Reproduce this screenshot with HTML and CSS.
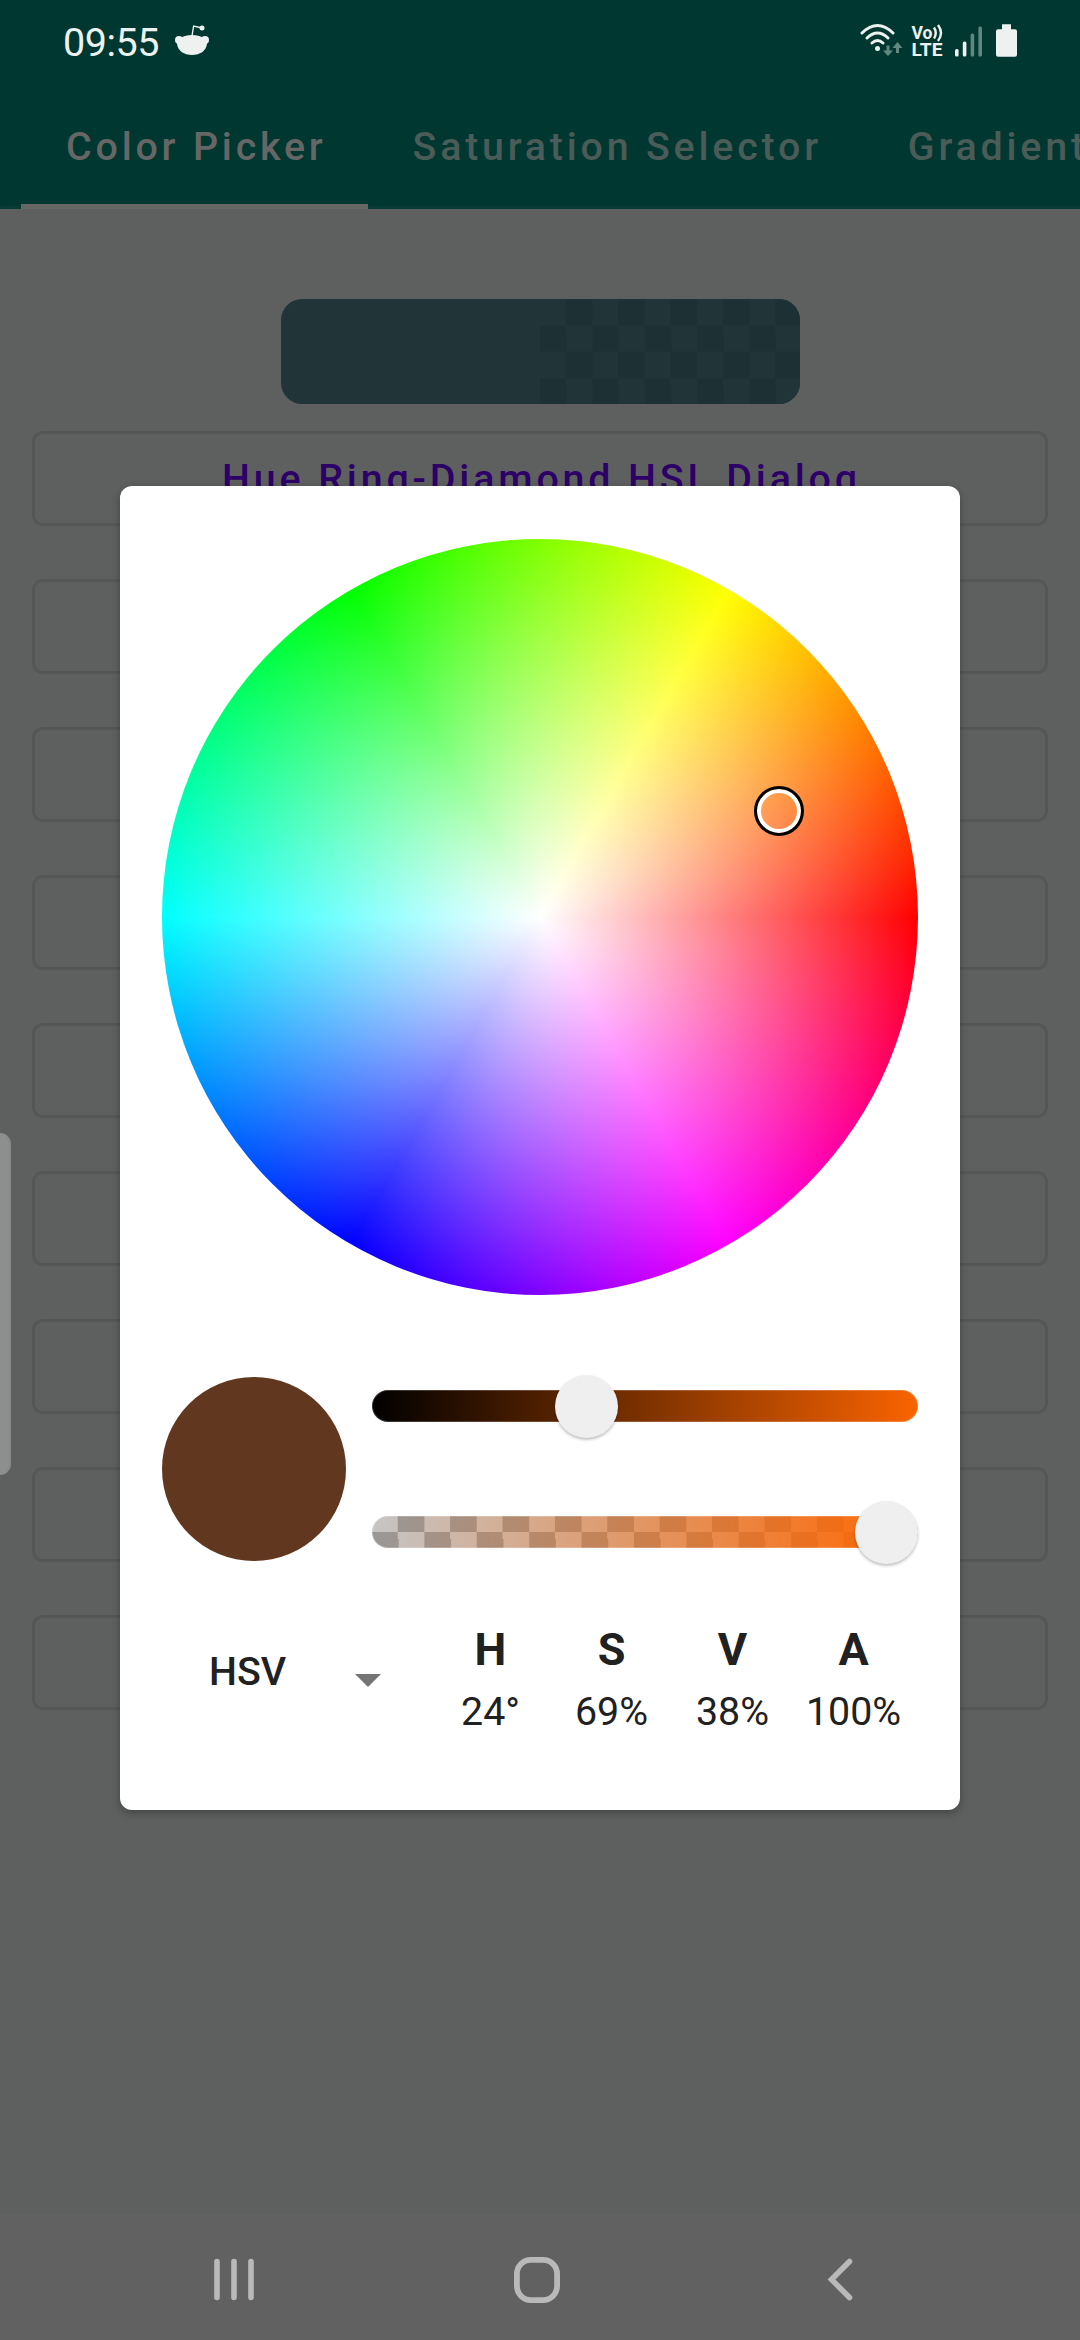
FILE: index.html
```html
<!DOCTYPE html>
<html lang="en">
<head>
<meta charset="utf-8">
<title>Color Picker</title>
<link rel="stylesheet" href="styles.css">
</head>
<body>
<div class="screen">
  <header class="header">
    <div class="status">
      <span class="clock">09:55</span>
      <svg class="notice" width="34" height="32" viewBox="0 0 34 32" fill="#edf1f0">
        <path d="M17 12 18.600 2 26 3.800" fill="none" stroke="#edf1f0" stroke-width="1.400"/>
        <circle cx="27" cy="4" r="2.500"/><circle cx="4" cy="16" r="4"/><circle cx="30" cy="16" r="4"/>
        <path d="M17 11C26 11 32 15 32 20C31 27 25 31 17 31S3 27 2 20C2 15 8 11 17 11Z"/>
      </svg>
      <svg class="indicators" width="160" height="46" viewBox="0 0 160 46">
        <g fill="none" stroke="#edf1f0" stroke-width="3" stroke-linecap="round">
          <path d="M3 13Q18.500 -2 34 13"/><path d="M8 18Q18.500 8 29 18"/><path d="M13 23Q18.500 18 24 23"/>
        </g>
        <circle cx="18.500" cy="28.500" r="2.500" fill="#edf1f0"/>
        <g fill="#628781">
          <path d="M27.500 25.500h3v5h3.500L29 36 24 30.500H27.500Z"/><path d="M37 33h3v-5H43.500L38.500 22 33.500 28h3.500Z"/>
        </g>
        <g class="volte" fill="#edf1f0">
          <text x="52.500" y="18.500" textLength="21" lengthAdjust="spacingAndGlyphs">Vo</text>
          <text x="52.500" y="36" textLength="31" lengthAdjust="spacingAndGlyphs">LTE</text>
        </g>
        <path d="M75 7.500Q78.500 13 75 18.500M79 5Q85 13 79 21" fill="none" stroke="#edf1f0" stroke-width="2.400"/>
        <g fill="#edf1f0"><rect x="96" y="29" width="3.600" height="7.600" rx="1.500"/><rect x="103.800" y="21.500" width="3.600" height="15.100" rx="1.500"/></g>
        <g fill="#628781"><rect x="111.600" y="13.500" width="3.600" height="23.100" rx="1.500"/><rect x="119.400" y="6.500" width="3.600" height="30.100" rx="1.500"/></g>
        <path d="M143 4.300h9v5h4q2 0 2 2v23.400q0 2-2 2h-17q-2 0-2-2v-23.400q0-2 2-2h4Z" fill="#edf1f0"/>
      </svg>
    </div>
    <nav class="tabs">
      <div class="tab tab-active">Color Picker</div>
      <div class="tab">Saturation Selector</div>
      <div class="tab">Gradient</div>
    </nav>
  </header>
  <main class="content">
    <div class="preview"><div class="preview-alpha"></div></div>
    <div class="buttons">
      <div class="button">Hue Ring-Diamond HSL Dialog</div>
      <div class="button"></div>
      <div class="button"></div>
      <div class="button"></div>
      <div class="button"></div>
      <div class="button"></div>
      <div class="button"></div>
      <div class="button"></div>
      <div class="button"></div>
    </div>
  </main>
  <footer class="navbar">
    <svg width="42" height="46" viewBox="0 0 42 46" stroke="#b9b9b9" stroke-width="5.600" stroke-linecap="round"><path d="M4 4.500V40.500M21 4.500V40.500M38 4.500V40.500"/></svg>
    <svg class="home" width="48" height="48" viewBox="0 0 48 48" fill="none" stroke="#b9b9b9" stroke-width="5.800"><rect x="3.900" y="3.900" width="40.200" height="40.200" rx="14"/></svg>
    <svg width="28" height="46" viewBox="0 0 28 46" fill="none" stroke="#b9b9b9" stroke-width="5.600" stroke-linecap="round"><path d="M23.500 4.500 5.500 22.500 23.500 40.500"/></svg>
  </footer>

  <div class="edge-handle"></div>

  <section class="dialog">
    <div class="wheel"><span class="wheel-thumb"></span></div>
    <div class="controls">
      <div class="swatch"></div>
      <div class="sliders">
        <div class="slider slider-value"><span class="thumb thumb-value"></span></div>
        <div class="slider slider-alpha"><span class="thumb thumb-alpha"></span></div>
      </div>
    </div>
    <div class="readout">
      <div class="mode">HSV<span class="caret"></span></div>
      <div class="channels">
        <div class="channel"><b>H</b><span>24°</span></div>
        <div class="channel"><b>S</b><span>69%</span></div>
        <div class="channel"><b>V</b><span>38%</span></div>
        <div class="channel"><b>A</b><span>100%</span></div>
      </div>
    </div>
  </section>
</div>
</body>
</html>
```
FILE: styles.css
```css
* { box-sizing: border-box; }
body { margin: 0; font-family: Roboto, sans-serif; }
.screen {
  position: relative;
  display: flex;
  flex-direction: column;
  width: 1080px;
  height: 2340px;
  overflow: hidden;
  background: #5e605f;
}

/* Header */
.header {
  display: flex;
  flex-direction: column;
  height: 209px;
  background: #003731;
  box-shadow: inset 0 -3px #083b36;
}
.status {
  display: flex;
  align-items: flex-start;
  height: 84px;
  padding: 20px 61px 0 63px;
}
.clock {
  width: 112px;
  font-size: 39.5px;
  line-height: 46px;
  letter-spacing: -0.5px;
  color: #edf1f0;
}
.notice { margin-top: 4px; }
.indicators { margin-left: auto; }
.volte { font: bold 18px Roboto, sans-serif; }
.tabs {
  display: flex;
  height: 125px;
  padding-left: 21px;
}
.tab {
  padding: 0 41px 0 45px;
  font-size: 39.375px;
  font-weight: 500;
  letter-spacing: 3.8px;
  line-height: 126px;
  white-space: nowrap;
  color: #4b5b58;
}
.tab-active {
  color: #666;
  border-bottom: 5px solid #666;
}

/* Page content */
.content {
  display: flex;
  flex: 1;
  flex-direction: column;
  align-items: center;
  padding-top: 90px;
}
.preview {
  display: flex;
  justify-content: flex-end;
  width: 519px;
  height: 105px;
  margin-left: 1px;
  overflow: hidden;
  background: #213539;
  border-radius: 21px;
}
.preview-alpha {
  width: 260px;
  background: repeating-conic-gradient(#1d3034 0 25%, #213539 0 50%) 0 0 / 52.4px 52.5px;
}
.buttons {
  display: flex;
  flex-direction: column;
  gap: 53px;
  width: 1016px;
  margin-top: 27px;
}
.button {
  height: 95px;
  padding-left: 3px;
  border: 3px solid #555757;
  border-radius: 11px;
  font-size: 39.375px;
  font-weight: 500;
  letter-spacing: 3.85px;
  line-height: 89px;
  text-align: center;
  color: #2c0066;
}
.navbar {
  display: flex;
  align-items: center;
  justify-content: space-between;
  height: 126px;
  padding: 6px 226px 0 213px;
  background: #616161;
}
.home { margin-right: 8px; }
.edge-handle {
  position: absolute;
  left: 0;
  top: 1133px;
  width: 11px;
  height: 342px;
  background: #8d8f8e;
  border-right: 2px solid #888a89;
  border-radius: 0 11px 11px 0;
}

/* Dialog */
.dialog {
  position: absolute;
  left: 120px;
  top: 486px;
  display: flex;
  flex-direction: column;
  width: 840px;
  height: 1324px;
  padding: 53px 42px 0;
  background: #fff;
  border-radius: 12px;
  box-shadow: 0 3px 9px rgba(0, 0, 0, 0.3);
}
.wheel {
  position: relative;
  width: 756px;
  height: 756px;
  border-radius: 50%;
  background:
    radial-gradient(closest-side, #fff, rgba(255, 255, 255, 0)),
    conic-gradient(from 90deg, #f00, #f0f, #00f, #0ff, #0f0, #ff0, #f00);
}
.wheel-thumb {
  position: absolute;
  left: 591.5px;
  top: 247px;
  width: 50px;
  height: 50px;
  border: 3px solid #000;
  border-radius: 50%;
  box-shadow: inset 0 0 0 4px #fff;
}
.controls {
  display: flex;
  gap: 26px;
  margin-top: 82px;
}
.swatch {
  width: 184px;
  height: 184px;
  background: #61381f;
  border-radius: 50%;
}
.sliders {
  display: flex;
  flex: 1;
  flex-direction: column;
  gap: 94px;
  padding-top: 13px;
}
.slider {
  position: relative;
  height: 32px;
  border-radius: 16px;
  box-shadow: inset 0 0 0 1px rgba(255, 255, 255, 0.2);
}
.slider-value { background: linear-gradient(93.400deg, #000, #fa6400); }
.slider-alpha {
  background:
    linear-gradient(93.400deg, rgba(255, 102, 0, 0), #f60),
    repeating-conic-gradient(#989898 0 25%, #c5c5c5 0 50%) 0 0 / 52.4px 32px;
}
.thumb {
  position: absolute;
  top: -15.500px;
  width: 63px;
  height: 63px;
  border-radius: 50%;
  background: #efefef;
  box-shadow: 0 2px 3px rgba(0, 0, 0, 0.24);
}
.thumb-value { left: 183px; }
.thumb-alpha { left: 483px; }
.readout {
  display: flex;
  margin-top: 62px;
  color: #212121;
}
.mode {
  display: flex;
  justify-content: space-between;
  width: 268px;
  padding: 26px 49px 0 47px;
  font-size: 39.375px;
  font-weight: 500;
  line-height: 46px;
}
.caret {
  width: 26px;
  height: 13px;
  margin-top: 25px;
  background: #757575;
  clip-path: polygon(0 0, 100% 0, 50% 100%);
}
.channels {
  display: grid;
  grid-template-columns: repeat(4, 121px);
}
.channel {
  display: flex;
  flex-direction: column;
  align-items: center;
  font-size: 39.375px;
  line-height: 46px;
}
.channel b {
  margin-bottom: 12px;
  font-size: 45px;
  line-height: 54px;
}
```
